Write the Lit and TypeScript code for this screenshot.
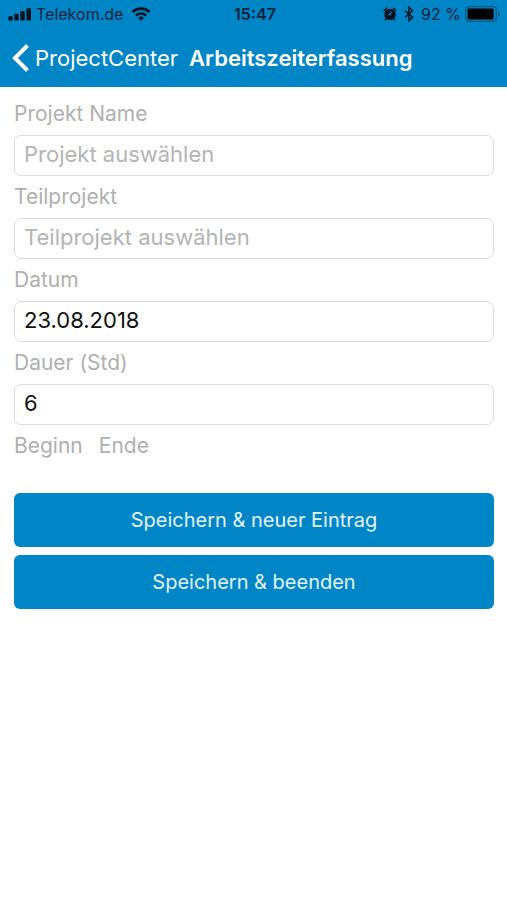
import { LitElement, html, css } from "lit";
import { customElement, state } from "lit/decorators.js";

interface Field {
  id: string;
  label: string;
  value: string;
  placeholder: string;
}

@customElement("status-bar")
class StatusBar extends LitElement {
  static styles = css`
    :host {
      display: grid;
      grid-template-columns: 1fr auto 1fr;
      align-items: center;
      height: 28px;
      padding: 0 7px 0 8px;
      color: #06243a;
      font-size: 16px;
      line-height: 20px;
      white-space: nowrap;
    }
    .side {
      display: flex;
      align-items: center;
      gap: 4px;
    }
    .carrier {
      margin-right: 4px;
    }
    .right {
      justify-content: flex-end;
    }
    .time {
      padding-left: 2px;
      font-weight: 600;
    }
    svg {
      display: block;
      flex: none;
    }
  `;

  render() {
    return html`
      <div class="side">
        <svg width="24" height="14" viewBox="0 0 24 14" fill="#04131f" aria-hidden="true">
          <rect x=".4" y="9.2" width="4.4" height="4.4" rx="1" />
          <rect x="6.4" y="6.8" width="4.4" height="6.8" rx="1" />
          <rect x="12.4" y="4" width="4.4" height="9.6" rx="1" />
          <rect x="18.4" y="1.2" width="4.6" height="12.4" rx="1" />
        </svg>
        <span class="carrier">Telekom.de</span>
        <svg width="20" height="14" viewBox="0 0 20 14" aria-hidden="true">
          <path d="M1.5 5a12.4 12.4 0 0 1 17 0" fill="none" stroke="#04131f" stroke-width="2.7" />
          <path d="M4.8 8.5a7.6 7.6 0 0 1 10.4 0" fill="none" stroke="#04131f" stroke-width="2.6" />
          <path d="M10 13.8 7 11a4.3 4.3 0 0 1 6 0z" fill="#04131f" />
        </svg>
      </div>
      <span class="time">15:47</span>
      <div class="side right">
        <svg width="14" height="14" viewBox="0 0 14 14" aria-hidden="true">
          <circle cx="7" cy="7.4" r="5.7" fill="#04131f" />
          <path d="M1.1 3.5 3.6 1.2M12.9 3.5 10.4 1.2M3.4 11.6 2.4 12.8M10.6 11.6l1 1.2" stroke="#04131f" stroke-width="1.5" stroke-linecap="round" />
          <path d="m8.4 4.6-1.2 3.2H4.8" fill="none" stroke="#0085c7" stroke-width="1.1" />
        </svg>
        <svg width="16" height="16" viewBox="0 0 16 16" aria-hidden="true">
          <path d="m4 4.8 7.6 6.4L8 14.6V1.4l3.6 3.4L4 11.2" fill="none" stroke="#04131f" stroke-width="1.5" />
        </svg>
        <span>92 %</span>
        <svg width="35" height="16" viewBox="0 0 35 16" aria-hidden="true">
          <rect x=".7" y=".7" width="30.6" height="14.6" rx="3" fill="none" stroke="#055680" stroke-width="1.3" />
          <rect x="2.6" y="2.6" width="26" height="10.8" rx="1" fill="#000" />
          <path d="M33 5.4q1.8.8 1.8 2.6T33 10.6z" fill="#055680" />
        </svg>
      </div>
    `;
  }
}

@customElement("nav-bar")
class NavBar extends LitElement {
  static styles = css`
    :host {
      display: flex;
      align-items: center;
      gap: 11px;
      height: 59px;
      padding: 0 12px;
      color: #fff;
      font-size: 22px;
      line-height: 28px;
      white-space: nowrap;
    }
    .back {
      display: flex;
      align-items: center;
      gap: 5px;
      color: inherit;
      text-decoration: none;
    }
    .title {
      margin: 0;
      font-size: 22px;
      font-weight: 600;
    }
    svg {
      display: block;
    }
  `;

  render() {
    return html`
      <a class="back" href="#projectcenter">
        <svg width="18" height="30" viewBox="0 0 18 30" aria-hidden="true">
          <path d="M15.5 2.5 3 15l12.5 12.5" fill="none" stroke="#fff" stroke-width="4" />
        </svg>
        <span>ProjectCenter</span>
      </a>
      <h1 class="title">Arbeitszeiterfassung</h1>
    `;
  }
}

@customElement("app-root")
class AppRoot extends LitElement {
  static styles = css`
    :host {
      display: block;
      min-height: 100vh;
      background: #fff;
      font-family: Inter, "Liberation Sans", sans-serif;
    }
    .header {
      background: #0085c7;
    }
    .form {
      display: flex;
      flex-direction: column;
      padding: 6px 13px 24px 14px;
    }
    .label {
      color: #b0b0b0;
      font-size: 21px;
      line-height: 42px;
    }
    .input {
      box-sizing: border-box;
      width: 100%;
      height: 41px;
      padding: 0 9px 4px;
      border: 1px solid #dedede;
      border-radius: 7px;
      background: #fff;
      color: #111;
      font: inherit;
      font-size: 22px;
      outline: none;
    }
    .input::placeholder {
      color: #b4b4b4;
      opacity: 1;
    }
    .times {
      display: flex;
      gap: 16px;
    }
    .actions {
      display: flex;
      flex-direction: column;
      gap: 8px;
      margin-top: 26px;
    }
    .button {
      height: 54px;
      border: 0;
      border-radius: 6px;
      background: #0085c7;
      color: #e2f6ff;
      font: inherit;
      font-size: 20px;
    }
  `;

  @state() fields: Field[] = [
    { id: "projekt", label: "Projekt Name", value: "", placeholder: "Projekt auswählen" },
    { id: "teilprojekt", label: "Teilprojekt", value: "", placeholder: "Teilprojekt auswählen" },
    { id: "datum", label: "Datum", value: "23.08.2018", placeholder: "" },
    { id: "dauer", label: "Dauer (Std)", value: "6", placeholder: "" },
  ];

  render() {
    return html`
      <header class="header">
        <status-bar></status-bar>
        <nav-bar></nav-bar>
      </header>
      <form class="form" @submit=${(e: Event) => e.preventDefault()}>
        ${this.fields.map(
          (f) => html`
            <label class="label" for=${f.id}>${f.label}</label>
            <input class="input" id=${f.id} type="text" .value=${f.value} placeholder=${f.placeholder} />
          `
        )}
        <div class="times">
          <span class="label">Beginn</span>
          <span class="label">Ende</span>
        </div>
        <div class="actions">
          <button class="button" type="submit">Speichern &amp; neuer Eintrag</button>
          <button class="button" type="submit">Speichern &amp; beenden</button>
        </div>
      </form>
    `;
  }
}
